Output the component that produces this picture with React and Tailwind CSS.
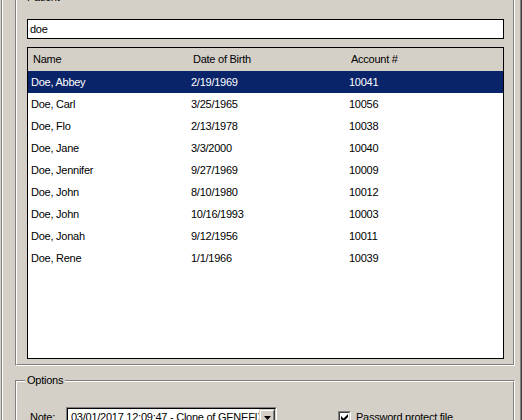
import React from 'react';

const patients = [
  { name: 'Doe, Abbey', dob: '2/19/1969', acct: '10041' },
  { name: 'Doe, Carl', dob: '3/25/1965', acct: '10056' },
  { name: 'Doe, Flo', dob: '2/13/1978', acct: '10038' },
  { name: 'Doe, Jane', dob: '3/3/2000', acct: '10040' },
  { name: 'Doe, Jennifer', dob: '9/27/1969', acct: '10009' },
  { name: 'Doe, John', dob: '8/10/1980', acct: '10012' },
  { name: 'Doe, John', dob: '10/16/1993', acct: '10003' },
  { name: 'Doe, Jonah', dob: '9/12/1956', acct: '10011' },
  { name: 'Doe, Rene', dob: '1/1/1966', acct: '10039' },
];

// etched group box, like the old win32 one
const GroupBox = ({ title, className, innerClass, children }) => (
  <div className={`border border-t-[#808080] border-l-[#808080] border-r-white border-b-white ${className}`}>
    <div className={`relative h-full border border-t-white border-l-white border-r-[#808080] border-b-[#808080] ${innerClass}`}>
      <span className="absolute -top-[8px] left-[8px] px-[2px] bg-[#d4d0c8]">{title}</span>
      {children}
    </div>
  </div>
);

export default function App() {
  const selected = 0;

  return (
    <div className="w-[522px] h-[420px] overflow-hidden bg-[#d4d0c8] flex font-['Liberation_Sans',Arial,sans-serif] text-[11px] leading-[13px] tracking-[-0.25px] text-black">
      <div className="w-px" />
      <div className="w-px bg-[#808080]" />
      <div className="w-px bg-white" />

      <div className="flex-1 flex flex-col pl-[12px] pr-[5px] -mt-[3px]">
        <GroupBox title="Patient" className="h-[369px] shrink-0" innerClass="flex flex-col pt-[20px] pl-[10px] pr-[9px]">
          <div className="h-[20px] border border-black bg-white flex items-center pl-[2px]">doe</div>

          <div className="mt-[8px] h-[312px] border border-black bg-white flex flex-col">
            <div className="h-[23px] bg-[#d4d0c8] flex items-center shrink-0">
              <div className="w-[160px] pl-[5px]">Name</div>
              <div className="w-[158px] pl-[5px]">Date of Birth</div>
              <div className="flex-1 pl-[5px]">Account #</div>
            </div>
            {patients.map((p, i) => (
              <div
                key={i}
                className={`h-[22px] flex items-center shrink-0 ${i === selected ? 'bg-[#0a246a] text-white' : ''}`}
              >
                <div className="w-[160px] pl-[3px]">{p.name}</div>
                <div className="w-[158px] pl-[3px]">{p.dob}</div>
                <div className="flex-1 pl-[3px]">{p.acct}</div>
              </div>
            ))}
          </div>
        </GroupBox>

        <GroupBox title="Options" className="mt-[14px] h-[60px] shrink-0" innerClass="pt-[25px] pl-[13px]">
          <div className="flex items-center">
            <span className="w-[36px]">Note:</span>
            <div className="w-[211px] h-[21px] border border-t-[#808080] border-l-[#808080] border-r-white border-b-white">
              <div className="h-full flex border border-t-black border-l-black border-r-[#d4d0c8] border-b-[#d4d0c8] bg-white">
                <span className="flex-1 pl-[3px] overflow-hidden whitespace-nowrap flex items-center">
                  03/01/2017 12:09:47 - Clone of GENEFIX
                </span>
                <div className="w-[16px] h-full border border-t-[#d4d0c8] border-l-[#d4d0c8] border-r-[#404040] border-b-[#404040]">
                  <div className="h-full bg-[#d4d0c8] border border-t-white border-l-white border-r-[#808080] border-b-[#808080] flex items-center justify-center">
                    <svg width="7" height="4" viewBox="0 0 7 4">
                      <polygon points="0,0 7,0 3.5,4" fill="#000" />
                    </svg>
                  </div>
                </div>
              </div>
            </div>

            <div className="ml-[61px] w-[13px] h-[13px] border border-t-[#808080] border-l-[#808080] border-r-white border-b-white">
              <div className="h-full border border-t-[#404040] border-l-[#404040] border-r-[#d4d0c8] border-b-[#d4d0c8] bg-white flex items-center justify-center">
                <svg width="7" height="7" viewBox="0 0 7 7">
                  <path d="M0 2v3l2 2h1l4-4V0L2.5 4.5z" fill="#000" />
                </svg>
              </div>
            </div>
            <span className="ml-[5px]">Password protect file</span>
          </div>
        </GroupBox>
      </div>

      <div className="w-px bg-[#808080]" />
      <div className="w-px bg-[#404040]" />
    </div>
  );
}
